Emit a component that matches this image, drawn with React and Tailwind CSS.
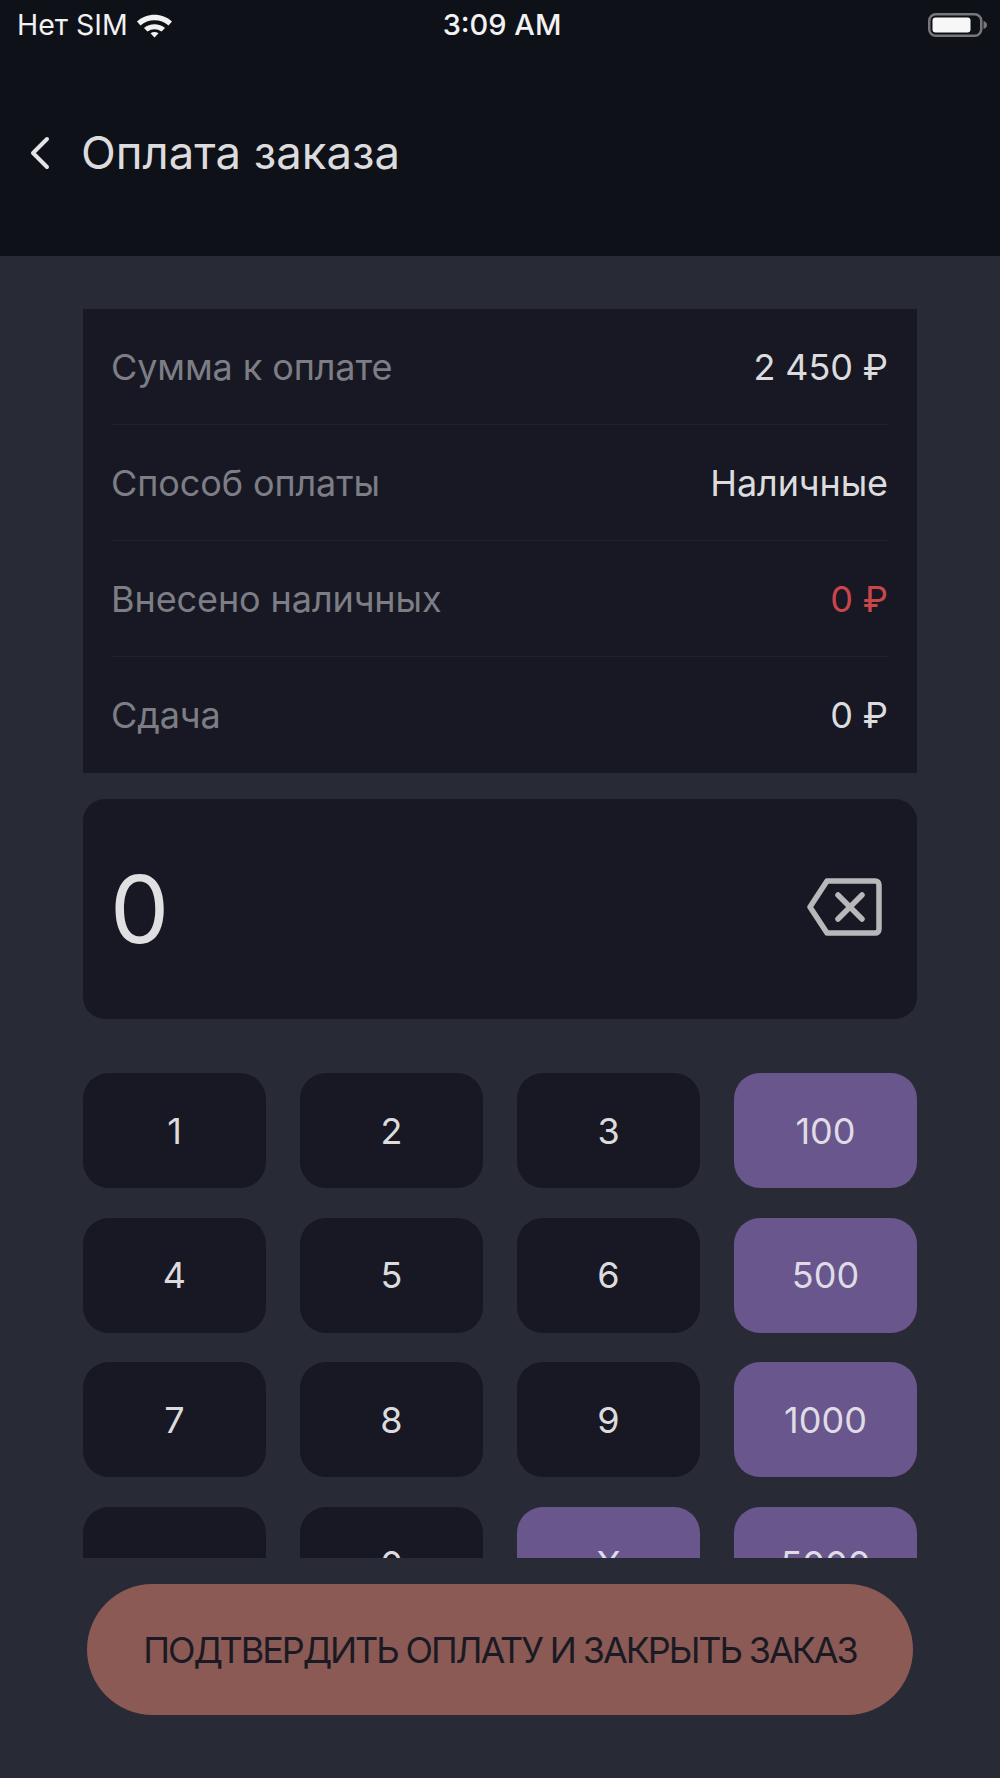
const rows = [
  { label: 'Сумма к оплате', value: '2 450 ₽', color: 'text-[#dcdcde]' },
  { label: 'Способ оплаты', value: 'Наличные', color: 'text-[#dcdcde]' },
  { label: 'Внесено наличных', value: '0 ₽', color: 'text-[#c9454a]' },
  { label: 'Сдача', value: '0 ₽', color: 'text-[#dcdcde]' },
]

const keys = [
  { text: '1' }, { text: '2' }, { text: '3' }, { text: '100', accent: true },
  { text: '4' }, { text: '5' }, { text: '6' }, { text: '500', accent: true },
  { text: '7' }, { text: '8' }, { text: '9' }, { text: '1000', accent: true },
  { text: ',' }, { text: '0' }, { text: 'Х', accent: true }, { text: '5000', accent: true },
]

function WifiIcon() {
  return (
    <svg width="37" height="25" viewBox="0 0 37 25" fill="none">
      <path d="M1 8.500C10.500 -0.500 26.500 -0.500 36 8.500L32.500 12.500C25 5.500 12 5.500 4.500 12.500Z" fill="#f2f2f2" />
      <path d="M8 15C13.800 10 23.200 10 29 15L25.600 18.600C21.300 15.300 15.700 15.300 11.400 18.600Z" fill="#f2f2f2" />
      <path d="M14.500 20.300C17 18.600 20 18.600 22.500 20.300L18.500 24.500Z" fill="#f2f2f2" />
    </svg>
  )
}

function BatteryIcon() {
  return (
    <svg width="59" height="24" viewBox="0 0 59 24" fill="none">
      <rect x="1.250" y="1.250" width="52" height="21.500" rx="6.500" stroke="#77777b" strokeWidth="2.500" />
      <rect x="4.500" y="4.500" width="38" height="15" rx="3" fill="#f7f7f7" />
      <path d="M55.500 8C57.500 8.500 59 10 59 12C59 14 57.500 15.500 55.500 16Z" fill="#77777b" />
    </svg>
  )
}

function BackspaceIcon() {
  return (
    <svg width="75" height="58" viewBox="0 0 75 58" fill="none" stroke="#b8b8ba" strokeWidth="5.500" strokeLinecap="round" strokeLinejoin="round">
      <path d="M20 3H68C70.500 3 72 4.500 72 7V51C72 53.500 70.500 55 68 55H20L3 29Z" />
      <path d="M31 17L55 41M55 17L31 41" />
    </svg>
  )
}

export default function App() {
  return (
    <div className="w-[1000px] h-[1778px] bg-[#282a36] overflow-hidden font-['Inter',sans-serif]">
      <header className="h-[256px] bg-[#0f1119]">
        <div className="flex items-center h-[50px] px-[17px] text-[#f2f2f2] text-[28.500px]">
          <div className="flex-1 flex items-center gap-[8px]">
            <span>Нет SIM</span>
            <WifiIcon />
          </div>
          <span className="font-medium text-[29px]">3:09 AM</span>
          <div className="flex-1 flex justify-end -mr-[4px]">
            <BatteryIcon />
          </div>
        </div>
        <div className="flex items-center mt-[73px] pl-[30px] gap-[31px]">
          <svg width="20" height="34" viewBox="0 0 20 34" fill="none" stroke="#e4e4e6" strokeWidth="4" strokeLinecap="round" strokeLinejoin="round">
            <path d="M17 3L3 17L17 31" />
          </svg>
          <h1 className="text-[45.500px] leading-[60px] text-[#dcdcde]">Оплата заказа</h1>
        </div>
      </header>

      <main className="px-[83px] pt-[53px]">
        <section className="bg-[#171823] pl-[28px] pr-[29px]">
          {rows.map((r, i) => (
            <div
              key={r.label}
              className={`flex items-center justify-between h-[116px] text-[36px] tracking-[-0.1px] ${i < rows.length - 1 ? 'border-b border-[#1f202b]' : ''}`}
            >
              <span className="text-[#7d7e85]">{r.label}</span>
              <span className={r.color}>{r.value}</span>
            </div>
          ))}
        </section>

        <section className="flex items-center justify-between h-[220px] mt-[26px] pl-[27px] pr-[35px] rounded-[22px] bg-[#171823]">
          <span className="text-[94px] leading-none text-[#e0e0e2]">0</span>
          <div className="-mt-[4px]">
            <BackspaceIcon />
          </div>
        </section>

        <div className="h-[485px] mt-[54px] overflow-hidden">
          <div className="grid grid-cols-4 gap-x-[34px] gap-y-[29.500px]">
            {keys.map((k) => (
              <button
                key={k.text}
                className={`h-[115px] rounded-[26px] text-[36px] ${k.accent ? 'bg-[#69568d] text-[#dfdce6]' : 'bg-[#171823] text-[#dcdcde]'}`}
              >
                {k.text}
              </button>
            ))}
          </div>
        </div>
      </main>

      <div className="px-[87px] mt-[26px]">
        <button className="w-full h-[131px] rounded-full bg-[#8b5a54] text-[36px] tracking-[-2.100px] text-[#1b1a24]">
          ПОДТВЕРДИТЬ ОПЛАТУ И ЗАКРЫТЬ ЗАКАЗ
        </button>
      </div>
    </div>
  )
}
